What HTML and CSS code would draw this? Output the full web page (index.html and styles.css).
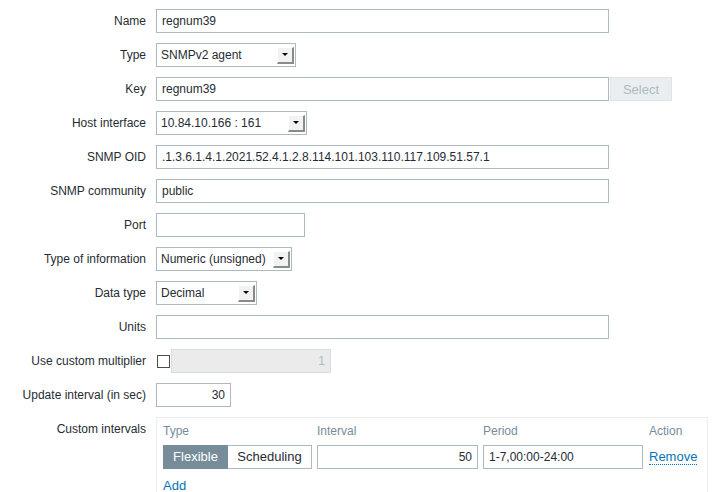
FILE: index.html
```html
<!DOCTYPE html>
<html>
<head>
<meta charset="utf-8">
<link rel="stylesheet" href="styles.css">
</head>
<body>
<div class="form">
  <div class="lbl">Name</div>
  <div class="field"><input class="inp w-wide" type="text" value="regnum39"></div>

  <div class="lbl">Type</div>
  <div class="field"><div class="sel w-type"><span class="sel-text">SNMPv2 agent</span><span class="arrow"><svg width="8" height="5" viewBox="0 0 8 5"><path d="M1 1h6l-3 3z" fill="#000"/></svg></span></div></div>

  <div class="lbl">Key</div>
  <div class="field"><input class="inp w-wide" type="text" value="regnum39"><button class="btn-disabled" type="button">Select</button></div>

  <div class="lbl">Host interface</div>
  <div class="field"><div class="sel w-host"><span class="sel-text">10.84.10.166 : 161</span><span class="arrow"><svg width="8" height="5" viewBox="0 0 8 5"><path d="M1 1h6l-3 3z" fill="#000"/></svg></span></div></div>

  <div class="lbl">SNMP OID</div>
  <div class="field"><input class="inp w-wide" type="text" value=".1.3.6.1.4.1.2021.52.4.1.2.8.114.101.103.110.117.109.51.57.1"></div>

  <div class="lbl">SNMP community</div>
  <div class="field"><input class="inp w-wide" type="text" value="public"></div>

  <div class="lbl">Port</div>
  <div class="field"><input class="inp w-port" type="text" value=""></div>

  <div class="lbl">Type of information</div>
  <div class="field"><div class="sel w-info"><span class="sel-text">Numeric (unsigned)</span><span class="arrow"><svg width="8" height="5" viewBox="0 0 8 5"><path d="M1 1h6l-3 3z" fill="#000"/></svg></span></div></div>

  <div class="lbl">Data type</div>
  <div class="field"><div class="sel w-data"><span class="sel-text">Decimal</span><span class="arrow"><svg width="8" height="5" viewBox="0 0 8 5"><path d="M1 1h6l-3 3z" fill="#000"/></svg></span></div></div>

  <div class="lbl">Units</div>
  <div class="field"><input class="inp w-wide" type="text" value=""></div>

  <div class="lbl">Use custom multiplier</div>
  <div class="field"><span class="chk"></span><input class="inp w-mult num disabled" type="text" value="1" disabled></div>

  <div class="lbl">Update interval (in sec)</div>
  <div class="field"><input class="inp w-upd num" type="text" value="30"></div>

  <div class="lbl">Custom intervals</div>
  <div class="field">
    <div class="ci-box">
      <div class="ci-grid">
        <div class="ci-head">Type</div>
        <div class="ci-head">Interval</div>
        <div class="ci-head">Period</div>
        <div class="ci-head">Action</div>

        <div class="radio-group"><span class="rb rb-on">Flexible</span><span class="rb">Scheduling</span></div>
        <input class="inp num ci-inp" type="text" value="50">
        <input class="inp ci-inp" type="text" value="1-7,00:00-24:00">
        <a class="link-dotted" href="#">Remove</a>
      </div>
      <a class="add-link" href="#">Add</a>
    </div>
  </div>
</div>
</body>
</html>
```

FILE: styles.css
```css
html, body {
  margin: 0;
  padding: 0;
  background: #ffffff;
}
body {
  font-family: "Liberation Sans", Arial, sans-serif;
  font-size: 12px;
  color: #1f2c33;
}
.form {
  display: grid;
  grid-template-columns: 146px 1fr;
  column-gap: 10px;
  row-gap: 10px;
  padding-top: 9px;
}
.lbl {
  text-align: right;
  line-height: 24px;
  white-space: nowrap;
}
.field {
  display: flex;
  align-items: center;
  min-height: 24px;
}
.inp {
  box-sizing: border-box;
  height: 24px;
  margin: 0;
  padding: 0 5px;
  border: 1px solid #acbbc2;
  background: #fff;
  font-family: "Liberation Sans", Arial, sans-serif;
  font-size: 12px;
  color: #1f2c33;
  outline: none;
}
.num { text-align: right; }
.w-wide { width: 453px; }
.w-port { width: 149px; }
.w-upd { width: 75px; }
.w-mult { width: 160px; }
.inp.disabled {
  background: #ebebeb;
  border-color: #d5dde1;
  color: #acbbc2;
}
.chk {
  box-sizing: border-box;
  width: 13px;
  height: 13px;
  border: 1px solid #4d4d4d;
  background: #fff;
  margin-left: 1px;
  margin-right: 1px;
}
.btn-disabled {
  box-sizing: border-box;
  height: 24px;
  width: 62px;
  margin: 0 0 0 1px;
  padding: 0;
  border: 1px solid #dfe4e7;
  background: #ebeef0;
  color: #acbbc2;
  font-family: "Liberation Sans", Arial, sans-serif;
  font-size: 13px;
}
.sel {
  box-sizing: border-box;
  height: 24px;
  border: 1px solid #acbbc2;
  background: #fff;
  display: flex;
  align-items: center;
  justify-content: space-between;
  padding: 0 1px 0 4px;
}
.sel-text {
  white-space: nowrap;
  font-size: 12px;
}
.w-type { width: 140px; }
.w-host { width: 151px; }
.w-info { width: 136px; }
.w-data { width: 101px; }
.arrow {
  box-sizing: border-box;
  width: 17px;
  height: 17px;
  display: flex;
  align-items: center;
  justify-content: center;
  background: #f2f2f2;
  border-top: 1px solid #ffffff;
  border-left: 1px solid #ffffff;
  border-right: 2px solid #8a8a8a;
  border-bottom: 2px solid #8a8a8a;
  margin-left: 4px;
}
.arrow svg { display: block; }
.ci-box {
  box-sizing: border-box;
  width: 552px;
  border: 1px solid #ebeef0;
  border-bottom: none;
  padding: 5px 6px 0 6px;
  align-self: flex-start;
}
.ci-grid {
  display: grid;
  grid-template-columns: 149px 161px 160px auto;
  column-gap: 5px;
  row-gap: 6px;
  align-items: center;
}
.ci-grid > :nth-child(4n) { margin-left: 1px; }
.ci-head {
  color: #768d99;
  line-height: 16px;
}
.ci-inp { width: 100%; }
.radio-group {
  display: flex;
  height: 24px;
}
.rb {
  box-sizing: border-box;
  height: 24px;
  line-height: 22px;
  border: 1px solid #acbbc2;
  background: #fff;
  color: #1f2c33;
  font-size: 13px;
  text-align: center;
}
.rb:first-child { width: 65px; }
.rb:last-child { width: 84px; border-left: none; }
.rb-on {
  background: #768d99;
  border-color: #768d99;
  color: #fff;
}
.link-dotted {
  color: #0275b8;
  text-decoration: none;
  border-bottom: 1px dotted #0275b8;
  font-size: 13px;
  justify-self: start;
  line-height: 15px;
}
.add-link {
  display: inline-block;
  color: #0275b8;
  text-decoration: none;
  font-size: 13px;
  line-height: 18px;
  margin-top: 8px;
}
```
